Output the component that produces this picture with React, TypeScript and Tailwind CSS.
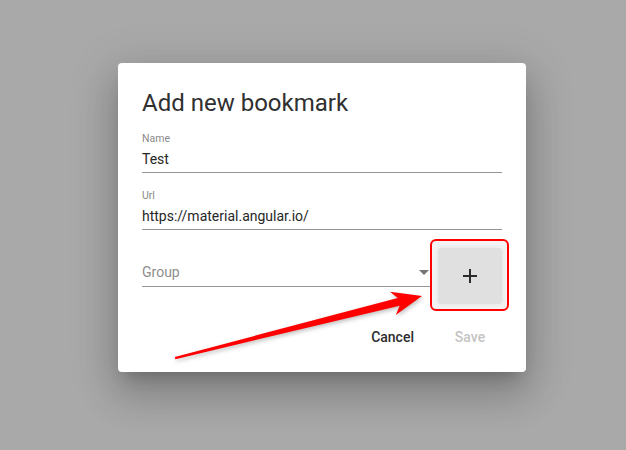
import { useState } from 'react';

const font = { fontFamily: 'Roboto, "Liberation Sans", sans-serif' };

interface FieldProps {
    label: string;
    value: string;
    className?: string;
}

const TextField = ({ label, value, className = '' }: FieldProps) => (
    <div className={className}>
        <div className="h-[12px] text-[10.5px] leading-[12px] text-[#8a8a8a]">{label}</div>
        <div className="mt-[4px] pb-[3px] border-b border-[#949494]">
            <div className="h-[20px] text-[14px] leading-[20px] text-[#262626]">{value}</div>
        </div>
    </div>
);

const Arrow = () => (
    <svg
        className="absolute left-0 top-0 pointer-events-none"
        width="626"
        height="450"
        viewBox="0 0 626 450"
        style={{ filter: 'drop-shadow(1px 2px 2px rgba(0,0,0,0.25))' }}
    >
        <polygon
            points="174.8,357 397.7,297.9 390,291.7 422,296 395.8,314.9 399.7,305.7 175.4,359.2"
            fill="#ff0000"
        />
    </svg>
);

export default function App() {
    const [group] = useState('');

    return (
        <div className="relative w-[626px] h-[450px] overflow-hidden bg-[#a9a9a9] pl-[118px] pt-[63px]" style={font}>
            <div className="w-[408px] h-[309px] bg-white rounded-[4px] px-6 pt-6 shadow-[0_11px_15px_-7px_rgba(0,0,0,0.2),0_24px_38px_3px_rgba(0,0,0,0.14),0_9px_46px_8px_rgba(0,0,0,0.12)]">
                <h2 className="text-[24px] leading-[32px] font-normal text-[#303030]">Add new bookmark</h2>

                <TextField label="Name" value="Test" className="pt-[14px]" />
                <TextField label="Url" value="https://material.angular.io/" className="pt-[17px]" />

                <div className="mt-[18px] flex items-start gap-2">
                    <div className="flex-1 pt-[14px]">
                        <div className="flex items-center pb-[4px] border-b border-[#949494]">
                            <div className="h-[20px] text-[14px] leading-[20px] text-[#8e8e8e]">{group || 'Group'}</div>
                            <div className="ml-auto mr-px w-0 h-0 border-l-[5px] border-r-[5px] border-t-[5px] border-l-transparent border-r-transparent border-t-[#757575]" />
                        </div>
                    </div>
                    <div className="relative">
                        <div className="absolute -left-[8px] -right-[7px] -top-[9px] -bottom-[7px] rounded-[6px] border-2 border-[#ff0000] bg-[#f3f3f3]" />
                        <button className="relative w-[64px] h-[56px] rounded-[4px] bg-[#e0e0e0] flex items-center justify-center shadow-[0_0_4px_1px_rgba(0,0,0,0.06)]">
                            <svg width="16" height="16" viewBox="0 0 16 16">
                                <path d="M8 1v14M1 8h14" stroke="#2b2b2b" strokeWidth="2" />
                            </svg>
                        </button>
                    </div>
                </div>

                <div className="mt-[15px] flex justify-end gap-2">
                    <button className="h-[36px] px-4 min-w-[64px] text-[14px] leading-[36px] font-medium text-[#2e2e2e]">Cancel</button>
                    <button disabled className="h-[36px] px-4 min-w-[64px] text-[14px] leading-[36px] font-medium text-[#c4c4c4]">Save</button>
                </div>
            </div>
            <Arrow />
        </div>
    );
}
